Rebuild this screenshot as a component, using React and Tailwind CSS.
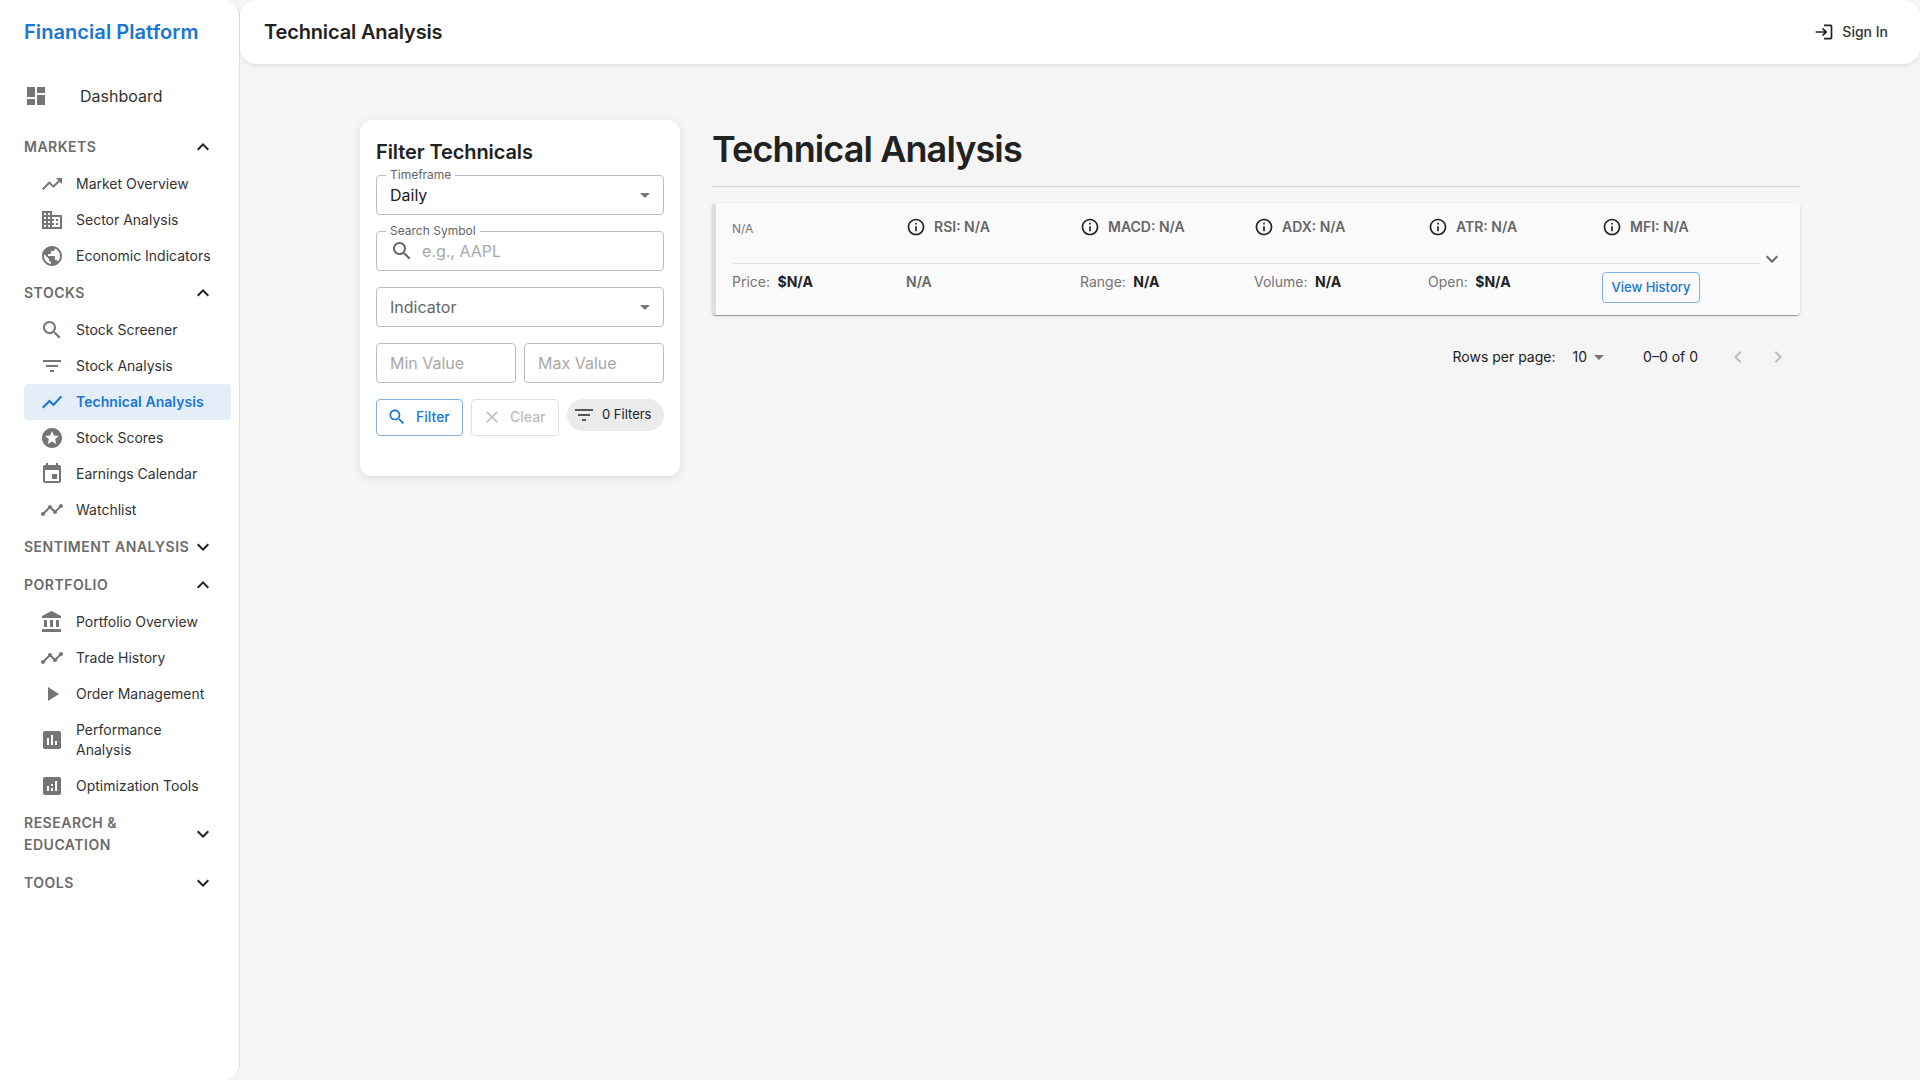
const icons = {
  dashboard: "M3 13h8V3H3v10zm0 8h8v-6H3v6zm10 0h8V11h-8v10zm0-18v6h8V3h-8z",
  trendingUp: "M16 6l2.29 2.29-4.88 4.88-4-4L2 16.59 3.41 18l6-6 4 4 6.3-6.29L22 12V6z",
  domain: "M12 7V3H2v18h20V7H12zM6 19H4v-2h2v2zm0-4H4v-2h2v2zm0-4H4V9h2v2zm0-4H4V5h2v2zm4 12H8v-2h2v2zm0-4H8v-2h2v2zm0-4H8V9h2v2zm0-4H8V5h2v2zm10 12h-8v-2h2v-2h-2v-2h2v-2h-2V9h8v10zm-2-8h-2v2h2v-2zm0 4h-2v2h2v-2z",
  publicGlobe: "M12 2C6.48 2 2 6.48 2 12s4.48 10 10 10 10-4.48 10-10S17.52 2 12 2zm-1 17.93c-3.95-.49-7-3.85-7-7.93 0-.62.08-1.21.21-1.79L9 15v1c0 1.1.9 2 2 2v1.93zm6.9-2.54c-.26-.81-1-1.39-1.9-1.39h-1v-3c0-.55-.45-1-1-1H8v-2h2c.55 0 1-.45 1-1V7h2c1.1 0 2-.9 2-2v-.41c2.93 1.19 5 4.06 5 7.41 0 2.08-.8 3.97-2.1 5.39z",
  search: "M15.5 14h-.79l-.28-.27C15.41 12.59 16 11.11 16 9.5 16 5.91 13.09 3 9.5 3S3 5.91 3 9.5 5.91 16 9.5 16c1.61 0 3.09-.59 4.23-1.57l.27.28v.79l5 4.99L20.49 19l-4.99-5zm-6 0C7.01 14 5 11.99 5 9.5S7.01 5 9.5 5 14 7.01 14 9.5 11.99 14 9.5 14z",
  filterList: "M10 18h4v-2h-4v2zM3 6v2h18V6H3zm3 7h12v-2H6v2z",
  showChart: "M3.5 18.49l6-6.01 4 4L22 6.92l-1.41-1.41-7.09 7.97-4-4L2 16.99z",
  stars: "M11.99 2C6.47 2 2 6.48 2 12s4.47 10 9.99 10C17.52 22 22 17.52 22 12S17.52 2 11.99 2zm4.24 16L12 15.45 7.77 18l1.12-4.81-3.73-3.23 4.92-.42L12 5l1.92 4.53 4.92.42-3.73 3.23L16.23 18z",
  event: "M17 12h-5v5h5v-5zM16 1v2H8V1H6v2H5c-1.11 0-1.99.9-1.99 2L3 19c0 1.1.89 2 2 2h14c1.1 0 2-.9 2-2V5c0-1.1-.9-2-2-2h-1V1h-2zm3 18H5V8h14v11z",
  timeline: "M23 8c0 1.1-.9 2-2 2-.18 0-.35-.02-.51-.07l-3.56 3.55c.05.16.07.34.07.52 0 1.1-.9 2-2 2s-2-.9-2-2c0-.18.02-.36.07-.52l-2.55-2.55c-.16.05-.34.07-.52.07s-.36-.02-.52-.07l-4.55 4.56c.05.16.07.33.07.51 0 1.1-.9 2-2 2s-2-.9-2-2 .9-2 2-2c.18 0 .35.02.51.07l4.56-4.55C8.02 9.36 8 9.18 8 9c0-1.1.9-2 2-2s2 .9 2 2c0 .18-.02.36-.07.52l2.55 2.55c.16-.05.34-.07.52-.07s.36.02.52.07l3.55-3.56C19.02 8.35 19 8.18 19 8c0-1.1.9-2 2-2s2 .9 2 2z",
  bank: "M4 10v7h3v-7H4zm6 0v7h3v-7h-3zM2 22h19v-3H2v3zm14-12v7h3v-7h-3zm-4.5-9L2 6v2h19V6l-9.5-5z",
  play: "M8 5v14l11-7z",
  assessment: "M19 3H5c-1.1 0-2 .9-2 2v14c0 1.1.9 2 2 2h14c1.1 0 2-.9 2-2V5c0-1.1-.9-2-2-2zM9 17H7v-7h2v7zm4 0h-2V7h2v10zm4 0h-2v-4h2v4z",
  analytics: "M19 3H5c-1.1 0-2 .9-2 2v14c0 1.1.9 2 2 2h14c1.1 0 2-.9 2-2V5c0-1.1-.9-2-2-2zM9 17H7v-5h2v5zm4 0h-2v-3h2v3zm0-5h-2v-2h2v2zm4 5h-2V7h2v10z",
  info: "M11 7h2v2h-2zm0 4h2v6h-2zm1-9C6.48 2 2 6.48 2 12s4.48 10 10 10 10-4.48 10-10S17.52 2 12 2zm0 18c-4.41 0-8-3.59-8-8s3.59-8 8-8 8 3.59 8 8-3.59 8-8 8z",
  expandMore: "M16.59 8.59 12 13.17 7.41 8.59 6 10l6 6 6-6z",
  expandLess: "m12 8-6 6 1.41 1.41L12 10.83l4.59 4.58L18 14z",
  login: "M11 7 9.6 8.4l2.6 2.6H2v2h10.2l-2.6 2.6L11 17l5-5-5-5zm9 12h-8v2h8c1.1 0 2-.9 2-2V5c0-1.1-.9-2-2-2h-8v2h8v14z",
  clear: "M19 6.41 17.59 5 12 10.59 6.41 5 5 6.41 10.59 12 5 17.59 6.41 19 12 13.41 17.59 19 19 17.59 13.41 12z",
  dropDown: "m7 10 5 5 5-5z",
  left: "M15.41 7.41 14 6l-6 6 6 6 1.41-1.41L10.83 12z",
  right: "M10 6 8.59 7.41 13.17 12l-4.58 4.59L10 18l6-6z",
};

const Icon = ({ name, className = "w-6 h-6" }) => (
  <svg viewBox="0 0 24 24" fill="currentColor" className={`shrink-0 ${className}`}>
    <path d={icons[name]} />
  </svg>
);

const navSections = [
  {
    title: "MARKETS",
    open: true,
    items: [
      { label: "Market Overview", icon: "trendingUp" },
      { label: "Sector Analysis", icon: "domain" },
      { label: "Economic Indicators", icon: "publicGlobe" },
    ],
  },
  {
    title: "STOCKS",
    open: true,
    items: [
      { label: "Stock Screener", icon: "search" },
      { label: "Stock Analysis", icon: "filterList" },
      { label: "Technical Analysis", icon: "showChart", active: true },
      { label: "Stock Scores", icon: "stars" },
      { label: "Earnings Calendar", icon: "event" },
      { label: "Watchlist", icon: "timeline" },
    ],
  },
  { title: "SENTIMENT ANALYSIS", open: false, items: [] },
  {
    title: "PORTFOLIO",
    open: true,
    items: [
      { label: "Portfolio Overview", icon: "bank" },
      { label: "Trade History", icon: "timeline" },
      { label: "Order Management", icon: "play" },
      { label: "Performance Analysis", icon: "assessment" },
      { label: "Optimization Tools", icon: "analytics" },
    ],
  },
  { title: "RESEARCH & EDUCATION", open: false, items: [] },
  { title: "TOOLS", open: false, items: [] },
];

const NavSection = ({ section }) => (
  <div>
    <div className="flex items-center justify-between pl-6 pr-6 py-2">
      <span className="text-sm leading-[22px] font-semibold tracking-[0.5px] text-[#6b6b6b]">{section.title}</span>
      <Icon name={section.open ? "expandLess" : "expandMore"} className="w-6 h-6 -my-1 text-[#212121]" />
    </div>
    {section.items.map((item) => (
      <div
        key={item.label}
        className={`ml-6 mr-2 flex items-center pl-4 pr-4 py-2 rounded ${item.active ? "bg-[#e3eef9] text-[#1976d2]" : "text-[#333333]"}`}
      >
        <Icon name={item.icon} className={`w-6 h-6 mr-3 -my-1 ${item.active ? "text-[#1976d2]" : "text-[#757575]"}`} />
        <span className={`text-sm leading-5 ${item.active ? "font-semibold tracking-[0.05px]" : ""}`}>{item.label}</span>
      </div>
    ))}
  </div>
);

const Sidebar = () => (
  <aside className="w-[240px] shrink-0 min-h-screen bg-white border-r border-[#e0e0e0] rounded-r-2xl">
    <div className="h-16 pl-6 flex items-center">
      <span className="text-xl font-semibold tracking-[0.07px] text-[#1976d2]">Financial Platform</span>
    </div>
    <div className="flex items-center h-12 mt-2 mb-2 pl-6">
      <Icon name="dashboard" className="w-6 h-6 text-[#757575] mr-8" />
      <span className="text-base text-[#333333]">Dashboard</span>
    </div>
    {navSections.map((s) => (
      <NavSection key={s.title} section={s} />
    ))}
  </aside>
);

const Legend = ({ children }) => (
  <span className="absolute -top-[7px] left-[9px] px-1 bg-white text-xs leading-3 text-[#666666]">{children}</span>
);

const FilterCard = () => (
  <div className="w-[320px] shrink-0 h-[356px] bg-white rounded-xl shadow-[0_2px_8px_rgba(0,0,0,0.1)] px-4 pt-4">
    <h2 className="text-xl leading-8 font-semibold tracking-[-0.1px] text-[#212121] mb-[7px]">Filter Technicals</h2>
    <div className="flex flex-col gap-4">
      <div className="relative h-10 border border-[#bdbdbd] rounded flex items-center justify-between pl-[13px] pr-[6px]">
        <Legend>Timeframe</Legend>
        <span className="text-base text-[#212121]">Daily</span>
        <Icon name="dropDown" className="w-6 h-6 text-[#757575]" />
      </div>
      <div className="relative h-10 border border-[#bdbdbd] rounded flex items-center pl-[13px]">
        <Legend>Search Symbol</Legend>
        <Icon name="search" className="w-6 h-6 text-[#666666] mr-2" />
        <span className="text-base text-[#a8a8a8]">e.g., AAPL</span>
      </div>
      <div className="h-10 border border-[#bdbdbd] rounded flex items-center justify-between pl-[13px] pr-[6px]">
        <span className="text-base text-[#666666]">Indicator</span>
        <Icon name="dropDown" className="w-6 h-6 text-[#757575]" />
      </div>
      <div className="flex gap-2">
        <div className="flex-1 h-10 border border-[#bdbdbd] rounded flex items-center pl-[13px] text-base text-[#a8a8a8]">Min Value</div>
        <div className="flex-1 h-10 border border-[#bdbdbd] rounded flex items-center pl-[13px] text-base text-[#a8a8a8]">Max Value</div>
      </div>
      <div className="flex gap-2 items-start">
        <button className="h-[36.5px] w-[87px] border border-[#7fb3e6] rounded flex items-center pl-[10px] gap-[9px] text-sm font-medium text-[#1976d2]">
          <Icon name="search" className="w-5 h-5" />
          Filter
        </button>
        <button className="h-[36.5px] w-[88px] border border-[#e0e0e0] rounded flex items-center pl-[10px] gap-2 text-sm font-medium text-[#bdbdbd]">
          <Icon name="clear" className="w-5 h-5" />
          Clear
        </button>
        <div className="h-8 w-[97px] bg-[#ebebeb] rounded-2xl flex items-center pl-[5px] gap-[6px] text-[13px] text-[#212121]">
          <Icon name="filterList" className="w-6 h-6 text-[#555555]" />
          0 Filters
        </div>
      </div>
    </div>
  </div>
);

const metrics = ["RSI", "MACD", "ADX", "ATR", "MFI"];

const Field = ({ label, value }) => (
  <div className="flex items-center gap-[7.5px] text-sm leading-5">
    <span className="text-[#757575]">{label}</span>
    <span className="font-bold text-[#212121]">{value}</span>
  </div>
);

const ResultCard = () => (
  <div className="flex items-center bg-[#fafafa] border-l-4 border-[#e0e0e0] rounded shadow-[0_2px_1px_-1px_rgba(0,0,0,0.2),0_1px_1px_0_rgba(0,0,0,0.14),0_1px_3px_0_rgba(0,0,0,0.12)] pl-4 h-[112px]">
    <div className="w-[1028px]">
      <div className="grid grid-cols-[repeat(6,174px)] items-center h-6 mb-6">
        <span className="text-xs text-[#757575] mt-[3px]">N/A</span>
        {metrics.map((m) => (
          <div key={m} className="flex items-center gap-2">
            <Icon name="info" className="w-5 h-5 text-[#212121]" />
            <span className="text-sm font-semibold text-[#666666]">{m}: N/A</span>
          </div>
        ))}
      </div>
      <div className="border-t border-[#e0e0e0] pt-2">
        <div className="grid grid-cols-[repeat(6,174px)] items-start">
          <Field label="Price:" value="$N/A" />
          <span className="text-sm leading-5 font-semibold text-[#666666]">N/A</span>
          <Field label="Range:" value="N/A" />
          <Field label="Volume:" value="N/A" />
          <Field label="Open:" value="$N/A" />
          <button className="w-[98px] h-[31px] border border-[#7fb3e6] rounded text-[13px] font-medium text-[#1976d2]">View History</button>
        </div>
      </div>
    </div>
    <Icon name="expandMore" className="w-6 h-6 text-[#666666]" />
  </div>
);

const Pagination = () => (
  <div className="h-[52px] mt-4 flex items-center justify-end text-sm text-[#212121]">
    <span>Rows per page:</span>
    <span className="ml-[17px]">10</span>
    <Icon name="dropDown" className="w-6 h-6 text-[#757575]" />
    <span className="ml-[32px]">0–0 of 0</span>
    <Icon name="left" className="w-6 h-6 text-[#bdbdbd] ml-[28px]" />
    <Icon name="right" className="w-6 h-6 text-[#bdbdbd] ml-4 mr-[10px]" />
  </div>
);

export default function App() {
  return (
    <div className="flex min-h-screen bg-[#f5f5f5] font-['Inter',sans-serif]">
      <Sidebar />
      <div className="flex-1 min-w-0">
        <header className="h-16 bg-white rounded-2xl shadow-[0_2px_4px_rgba(0,0,0,0.08)] flex items-center justify-between pl-6 pr-8">
          <h1 className="text-xl font-semibold tracking-[-0.15px] text-[#212121]">Technical Analysis</h1>
          <div className="flex items-center gap-2 text-sm font-medium text-[#333333]">
            <Icon name="login" className="w-5 h-5 text-[#212121]" />
            Sign In
          </div>
        </header>
        <main className="px-[120px] pt-14 flex gap-8">
          <FilterCard />
          <div className="flex-1 min-w-0">
            <div className="pt-[7px] pb-[15px] mb-4 border-b border-[#d6d6d6]">
              <h1 className="text-4xl leading-[44px] font-semibold tracking-tight text-[#212121]">Technical Analysis</h1>
            </div>
            <ResultCard />
            <Pagination />
          </div>
        </main>
      </div>
    </div>
  );
}
